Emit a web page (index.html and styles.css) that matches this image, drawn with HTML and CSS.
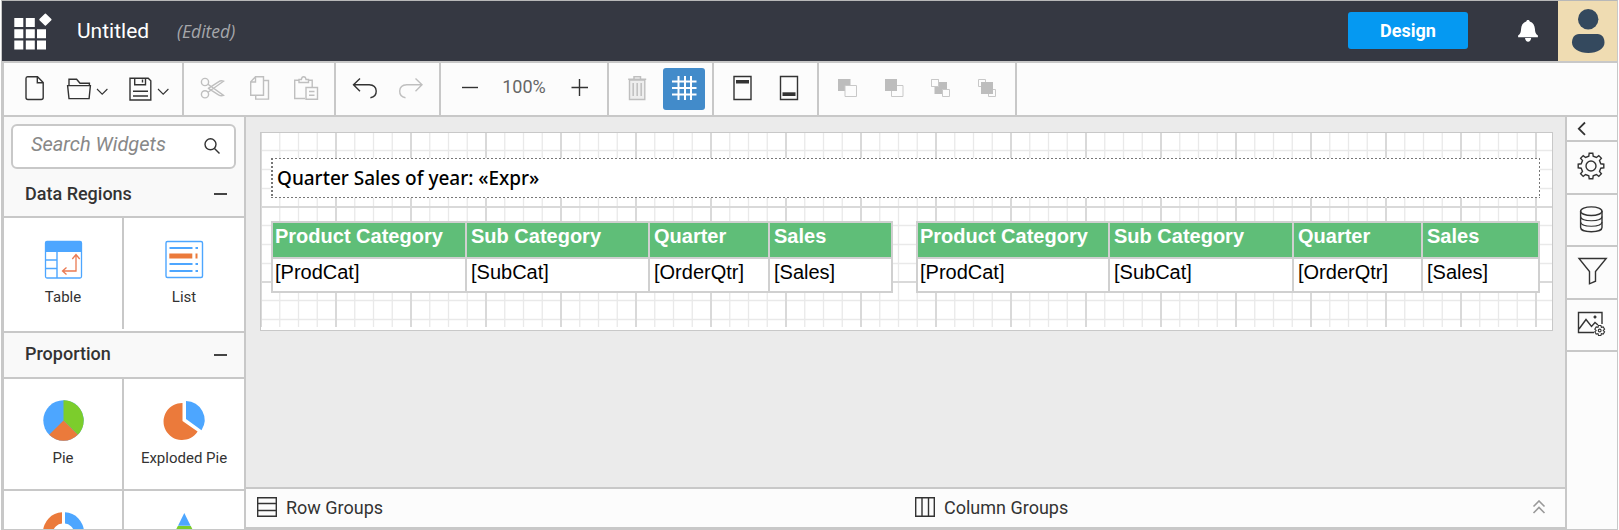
FILE: index.html
```html
<!DOCTYPE html>
<html lang="en">
<head>
<meta charset="utf-8">
<title>Report Designer</title>
<link rel="stylesheet" href="styles.css">
</head>
<body>
<div class="app">
  <header class="topbar">
    <svg class="logo" width="50" height="60" viewBox="2 1 50 60" fill="#fff"><path d="M14.3 18h9v9h-9zM25.8 18h9v9h-9zM14.3 29.2h9v9h-9zM25.8 29.2h9v9h-9zM37 29.2h9v9h-9zM14.3 40.6h9v9h-9zM25.8 40.6h9v9h-9zM37 40.6h9v9h-9z"/><path d="M45.4 14.2l5.4 5.4-5.4 5.4-5.4-5.4z" stroke="#fff" stroke-width="1.5" stroke-linejoin="round"/></svg>
    <h1 class="title">Untitled</h1>
    <span class="edited">(Edited)</span>
    <button class="design">Design</button>
    <svg class="bell" width="40" height="60" viewBox="1508 1 40 60" fill="#fff"><path d="M1528 20c1 0 1.6.6 1.7 1.4 3.4 1 5 4 5.2 7.4.2 3.400.6 5 3 6.700v1.700h-19.800v-1.700c2.400-1.700 2.800-3.300 3-6.700.2-3.400 1.800-6.400 5.200-7.400.1-.8.700-1.400 1.700-1.400zM1525 38h6.200c-.3 2.400-1.500 3.800-3.100 3.800s-2.800-1.400-3.100-3.800z"/></svg>
    <svg class="avatar" width="59" height="60" viewBox="1558 1 59 60" fill="#34495e"><circle cx="1588.200" cy="19.300" r="10.200"/><path d="M1579 34h18.500c4.500 0 7 4 7 8.500 0 6-7 10.500-16.200 10.500s-16.300-4.500-16.300-10.500c0-4.500 2.500-8.500 7-8.500z"/></svg>
  </header>

  <nav class="toolbar">
    <div class="group">
      <svg width="54" height="52" viewBox="4 63 54 52" class="ico"><path d="M27.500 76.700H37.500L43.200 82.500V97.500q0 2-2 2H28q-2 0-2-2V78.500q0-1.800 1.500-1.800zM37.300 77v5.700h5.700"/></svg>
      <svg width="60" height="52" viewBox="58 63 60 52" class="ico"><path d="M69 85v-5.800h7.600l3.400 4h9.400v2.300M67.600 85.600h22.800l-1.300 13H69z"/><path class="thin" d="M97 89l5.200 5.200 5.200-5.200"/></svg>
      <svg width="64" height="52" viewBox="118 63 64 52" class="ico"><path d="M130 78.200h18.200l2.600 2.600v19.200H130zM134.700 78.500v6.200h10.800v-6.200M142.500 79.500v3M133 91.200h15M133 96h15"/><path class="thin" d="M158 89l5.200 5.200 5.200-5.200"/></svg>
    </div>
    <div class="group">
      <svg width="52" height="52" viewBox="184 63 52 52" class="ico off"><circle cx="205" cy="82" r="3.600"/><circle cx="205" cy="94.300" r="3.600"/><path d="M208 84.200l15.500 11.200c-2 .8-3.500.4-5-.6l-10.500-6.600M208 92.200l15.500-11c-2-.8-3.500-.4-5 .6l-10.500 6.800"/></svg>
      <svg width="46" height="52" viewBox="236 63 46 52" class="ico off"><path d="M255.500 76.700h8v18.500h-12.800V81.700zM255.500 77v5h-4.800M264 80.500h4.500v18.600h-12.800v-3.500"/></svg>
      <svg width="52" height="52" viewBox="282 63 52 52" class="ico off"><path d="M305 98.500h-10.300V80.300h4.300M308 80.300h4.200V87M299 82.500h9.500v-3h-2.500q-.3-2.800-2.300-2.800t-2.300 2.800h-2.400zM306 87.500h11.500v11.700H306zM309 91.500h5.500M309 95.300h5.500"/></svg>
    </div>
    <div class="group">
      <svg width="52" height="52" viewBox="336 63 52 52" class="ico"><path d="M360 78.500l-6.500 6.300 6.500 6.400M353.800 84.800h15.400q6.800.4 7 6.200t-5.800 6.700"/></svg>
      <svg width="51" height="52" viewBox="388 63 51 52" class="ico off"><path d="M415.500 78.500l6.500 6.300-6.500 6.400M421.700 84.800h-15q-6.800.4-7 6.200t5.800 6.700"/></svg>
    </div>
    <div class="group zoom">
      <svg width="52" height="52" viewBox="441 63 52 52" class="ico"><path d="M462 87.500h16"/></svg>
      <span class="percent">100%</span>
      <svg width="52" height="52" viewBox="555 63 52 52" class="ico"><path d="M571.500 87.500H588M579.500 79v17"/></svg>
    </div>
    <div class="group">
      <svg width="54" height="52" viewBox="609 63 54 52" class="ico off"><path d="M629.500 80v19.500h15.300V80z" fill="#eee"/><path d="M628.200 79.200h18M634 78.500v-1.800h6.500v1.800M633.200 83v13M637.200 83v13M641.200 83v13" stroke-width="1.500"/></svg>
      <button class="gridbtn"><svg width="42" height="42" viewBox="663 68 42 42" fill="none" stroke="#fff" stroke-width="2"><path d="M678.500 76v24M685 76v24M691 76v24M672 81.500h24.500M672 88h24.500M672 94.500h24.500"/></svg></button>
    </div>
    <div class="group">
      <svg width="52" height="52" viewBox="714 63 52 52" class="ico"><path d="M734 76.500h17v23h-17z"/><path d="M736 80h13v3.500h-13z" fill="#333" stroke="none"/></svg>
      <svg width="51" height="52" viewBox="766 63 51 52" class="ico"><path d="M780.500 76.500h17v23h-17z"/><path d="M782.500 92.300h13v3.700h-13z" fill="#333" stroke="none"/></svg>
    </div>
    <div class="group">
      <svg width="52" height="52" viewBox="819 63 52 52" class="arr"><path class="solid" d="M838 79h12.500v12H838z"/><path d="M845 85.500h11.500v11H845z"/></svg>
      <svg width="46" height="52" viewBox="871 63 46 52" class="arr"><path d="M891.500 85.500H903v11h-11.500z"/><path class="solid" d="M885 79h12v12h-12z"/></svg>
      <svg width="46" height="52" viewBox="917 63 46 52" class="arr"><path d="M931.500 79.500h7v7h-7z"/><path class="solid" d="M934.500 82H947v12h-12.500z"/><path d="M942.500 89.500h7v7h-7z"/><path d="M931.500 79.500h7v7h-7z"/></svg>
      <svg width="52" height="52" viewBox="963 63 52 52" class="arr"><path d="M978.500 79.500h7v7h-7zM988.500 89.500h7v7h-7z"/><path class="solid" d="M981 82h12v12h-12z"/></svg>
    </div>
  </nav>

  <div class="main">
    <aside class="widgets">
      <div class="searchwrap"><div class="search"><span>Search Widgets</span>
        <svg width="30" height="40" viewBox="198 127 30 40" class="ico"><circle cx="210.500" cy="145.300" r="5.500"/><path d="M214.500 149.500l5 5"/></svg></div></div>
      <div class="sect"><span>Data Regions</span><i></i></div>
      <div class="cells regions">
        <div class="cell"><svg width="50" height="50" viewBox="38 234 50 50" fill="none"><rect x="45.500" y="241.500" width="36" height="36.500" rx="1.500" fill="#fff" stroke="#4da6ff" stroke-width="1.300"/><path d="M45.500 242h36v10h-36z" fill="#4da6ff"/><path d="M57 252v26M46 260h11M46 268.500h11" stroke="#4da6ff" stroke-width="1.400"/><path d="M76 255v16H63M72.300 259l3.700-4.500 3.700 4.500M66.500 267.500l-4 3.500 4 3.500" stroke="#ea7a52" stroke-width="1.300"/></svg><span>Table</span></div>
        <div class="cell"><svg width="50" height="50" viewBox="159 234 50 50" fill="none"><rect x="166" y="241.500" width="36.500" height="36" rx="1.500" stroke="#4da6ff" stroke-width="1.400"/><path d="M169.500 248h23M169.500 264h23M169.500 271h23M195.500 248h2.500M195.500 264h2.500M195.500 271h2.500" stroke="#4da6ff" stroke-width="1.800"/><path d="M169.300 253.500h23v5h-23zM195.500 253.500h2v5h-2z" fill="#eb7a3b"/></svg><span>List</span></div>
      </div>
      <div class="sect second"><span>Proportion</span><i></i></div>
      <div class="cells pies">
        <div class="cell"><svg width="50" height="50" viewBox="38 395 50 50"><circle cx="63.500" cy="420.500" r="20.200" fill="#4da6ff"/><path d="M63.500 420.500V400.300A20.200 20.200 0 0 1 77.800 434.800z" fill="#7ccd2c"/><path d="M63.500 420.500L77.800 434.800A20.200 20.200 0 0 1 49.200 434.800z" fill="#eb7a3b"/></svg><span>Pie</span></div>
        <div class="cell"><svg width="50" height="50" viewBox="159 395 50 50"><path d="M182.500 421V403A18.500 18.500 0 1 0 197.600 431.500z" fill="#eb7a3b"/><path d="M186 419V401A19 19 0 0 1 201.500 430.300z" fill="#4da6ff"/></svg><span>Exploded Pie</span></div>
      </div>
      <div class="cells last">
        <div class="cell"><svg width="50" height="22" viewBox="38 507 50 22"><path d="M62 512.300A20 20 0 0 0 43 532h10a10 10 0 0 1 9-8.500z" fill="#eb7a3b"/><path d="M65 512.300A20 20 0 0 1 84 532H74a10 10 0 0 0-9-8.500z" fill="#4da6ff"/></svg></div>
        <div class="cell"><svg width="50" height="22" viewBox="159 507 50 22"><path d="M184.300 513l6.300 12.700h-12.600z" fill="#4da6ff"/><path d="M177.800 526h13l2 4h-17z" fill="#7ccd2c"/></svg></div>
      </div>
    </aside>

    <section class="center">
      <div class="canvas">
        <div class="page">
          <svg class="grid" width="1291" height="194">
            <defs><pattern id="grid" width="75" height="75" patternUnits="userSpaceOnUse" fill="none">
              <path d="M18.750 0v75M37.500 0v75M56.250 0v75M0 17.500h75M0 36.500h75M0 55.500h75" stroke="#e9e9e9" stroke-width="1.300"/>
              <path d="M75 0v75M0 0v75M0 74h75" stroke="#d9d9d9" stroke-width="2"/></pattern></defs>
            <rect width="1291" height="194" fill="url(#grid)"/>
          </svg>
          <div class="textbox">Quarter Sales of year: «Expr»</div>
          <div class="tables">
            <div class="table t1">
              <b>Product Category</b><b>Sub Category</b><b>Quarter</b><b>Sales</b>
              <span>[ProdCat]</span><span>[SubCat]</span><span>[OrderQtr]</span><span>[Sales]</span>
            </div>
            <div class="table t2">
              <b>Product Category</b><b>Sub Category</b><b>Quarter</b><b>Sales</b>
              <span>[ProdCat]</span><span>[SubCat]</span><span>[OrderQtr]</span><span>[Sales]</span>
            </div>
          </div>
        </div>
      </div>
      <div class="groups">
        <div class="rowgroups"><svg width="20" height="20" viewBox="0 0 20 20" class="ico"><path d="M.7.700h18.600v18.600H.7zM.7 6.500h18.600M.7 13.500h18.600"/></svg><span>Row Groups</span></div>
        <div class="colgroups"><svg width="20" height="20" viewBox="0 0 20 20" class="ico"><path d="M.7.700h18.600v18.600H.7zM7 .7v18.600M13.500.7v18.600"/></svg><span>Column Groups</span></div>
        <svg class="up" width="14" height="14" viewBox="0 0 14 14" fill="none" stroke="#999" stroke-width="1.600"><path d="M1.500 6.500L7 1l5.500 5.500M1.500 13L7 7.500l5.500 5.500"/></svg>
      </div>
    </section>

    <aside class="side">
      <div class="tab collapse"><svg width="50" height="23" viewBox="1567 117 50 23" class="ico"><path d="M1585 122.500l-6.200 6.200 6.200 6.200" stroke-width="1.800"/></svg></div>
      <div class="tab"><svg width="50" height="50" viewBox="-24 -24 50 50" class="ico"><path d="M-2.200 -9.800L-1.800 -12.800H1.800L2.200 -9.800L5.400 -8.500L7.800 -10.400L10.400 -7.800L8.500 -5.400L9.800 -2.200L12.800 -1.800V1.800L9.800 2.200L8.500 5.400L10.400 7.800L7.800 10.400L5.400 8.500L2.200 9.800L1.800 12.800H-1.800L-2.200 9.800L-5.400 8.500L-7.800 10.400L-10.400 7.800L-8.500 5.400L-9.800 2.200L-12.800 1.800V-1.800L-9.800 -2.200L-8.500 -5.400L-10.400 -7.800L-7.800 -10.400L-5.400 -8.500Z"/><circle r="5"/></svg></div>
      <div class="tab short"><svg width="50" height="50" viewBox="1567 195 50 50" class="ico"><ellipse cx="1591.300" cy="211.200" rx="10.700" ry="4.300"/><path d="M1580.600 211v16.500c0 5.600 21.400 5.600 21.400 0V211"/><path class="thin" d="M1580.600 216.500c0 5.600 21.400 5.600 21.400 0M1580.600 222c0 5.600 21.400 5.600 21.400 0"/></svg></div>
      <div class="tab"><svg width="50" height="51" viewBox="1567 247 50 51" class="ico"><path d="M1579 258.500h27.200l-10.700 13v9.700l-6 2.600v-12.300z"/></svg></div>
      <div class="tab short"><svg width="50" height="50" viewBox="1567 300 50 50" class="ico"><path d="M1594 332.500h-15.500v-20h23.500v11.500M1579 329l7-9.500 5.500 7 3.500-4 3 2.500"/><circle cx="1595" cy="317" r="1.200" fill="#333" stroke-width=".7"/><g transform="translate(1599.700 330.500)"><path class="thin" d="M-1.200 -5H1.200L1.700 -3.200L3.500 -3.600L4.900 -1.400L3.600 0L4.900 1.400L3.500 3.600L1.700 3.200L1.200 5H-1.200L-1.700 3.200L-3.500 3.600L-4.900 1.400L-3.600 0L-4.900 -1.400L-3.500 -3.600L-1.700 -3.200Z"/><circle class="thin" r="1.400"/></g></svg></div>
    </aside>
  </div>
</div>
</body>
</html>
```
FILE: styles.css
```css
* { box-sizing: border-box; }
html { height: 530px; overflow: hidden; }
body { margin: 0; height: 530px; background: #fff; font-family: Roboto, "Liberation Sans", sans-serif; color: #333; overflow: hidden; }
svg { display: block; flex: none; }
button { border: 0; padding: 0; font: inherit; }

.app {
  width: 1617px; height: 530px; margin-left: 1px;
  display: flex; flex-direction: column; overflow: hidden;
  border: 1px solid #c8c8c8; border-top-color: #b8b8b8;
}
.topbar { height: 60px; flex: none; background: #353842; display: flex; align-items: center; }
.title { margin: 0 0 0 25px; width: 100px; font-size: 21px; font-weight: 400; color: #fff; line-height: 60px; }
.edited { font: italic 17.5px/60px "Open Sans", "Noto Sans", sans-serif; color: #a6a7ab; }
.design { margin-left: auto; width: 120px; height: 37px; margin-bottom: 1px; border-radius: 3px; background: #0599f2; color: #fff; font-size: 18px; font-weight: 700; }
.bell { margin-left: 40px; margin-right: 10px; }
.avatar { background: #efdcb2; }

.toolbar { height: 56px; flex: none; display: flex; background: #fcfcfc; border: solid #c8c8c8; border-width: 2px 0 2px 2px; }
.group { display: flex; align-items: center; border-right: 2px solid #c8c8c8; }
.ico { fill: none; stroke: #333; stroke-width: 1.4; }
.ico.off { stroke: #bfbfbf; }
.ico .thin { stroke-width: 1.1; }
.arr { fill: #fcfcfc; stroke: #c8c8c8; stroke-width: 1; }
.arr .solid { fill: #bdbdbd; stroke: none; }
.percent { width: 62px; text-align: center; font-size: 18px; line-height: 48px; color: #666; padding-bottom: 4px; }
.gridbtn { width: 42px; height: 42px; margin-right: 7px; border-radius: 3px; background: #428bca; }

.main { flex: 1; min-height: 0; display: flex; border-left: 2px solid #c8c8c8; }
.widgets { width: 242px; flex: none; border-right: 2px solid #c8c8c8; background: #fcfcfc; overflow: hidden; }
.searchwrap { padding: 7px 8px 0 7px; background: #f9f9f9; height: 55px; }
.search { height: 45px; border: 2px solid #c8c8c8; border-radius: 6px; background: #fff; display: flex; justify-content: space-between; padding: 0 6px 0 18px; font-size: 20px; font-style: italic; color: #888; line-height: 37px; }
.sect { height: 46px; background: #f9f9f9; border-bottom: 2px solid #c8c8c8; display: flex; align-items: center; justify-content: space-between; padding: 0 17px 0 21px; font-size: 18px; font-weight: 500; }
.sect span { padding-bottom: 2px; }
.sect.second span { padding-bottom: 4px; }
.sect i { width: 13px; height: 2px; background: #444; }
.cells { display: grid; grid-template-columns: 120px 120px; background: #fff; border-bottom: 2px solid #c8c8c8; }
.cell { display: flex; flex-direction: column; align-items: center; padding-top: 16px; font-size: 15px; line-height: 26px; overflow: hidden; }
.cell:first-child { border-right: 2px solid #c8c8c8; }
.regions { height: 115px; }
.regions .cell { height: 111px; }
.pies { height: 112px; }
.last { height: 38px; border-bottom: 0; }

.center { flex: 1; display: flex; flex-direction: column; }
.canvas { flex: 1; background: #ebebeb; padding: 15px 12px 0 14px; }
.page { position: relative; height: 199px; background: #fff; border: 1px solid #c8c8c8; padding: 25px 12px 0 10px; }
.grid { position: absolute; left: 0; top: 0; }
.textbox {
  position: relative; height: 40px; padding-left: 6px;
  font: 500 19px/40px "Noto Sans", "Open Sans", sans-serif; letter-spacing: -.02px; color: #000;
  background:
    repeating-linear-gradient(90deg, #777 0 2px, #fff 2px 4px) 0 0 / 100% 1px no-repeat,
    repeating-linear-gradient(90deg, #777 0 2px, #fff 2px 4px) 0 100% / 100% 1px no-repeat,
    repeating-linear-gradient(#777 0 2px, #fff 2px 4px) 0 0 / 2px 100% no-repeat,
    repeating-linear-gradient(#777 0 2px, #fff 2px 4px) 100% 0 / 1px 100% no-repeat,
    #fff;
}
.tables { position: relative; display: flex; justify-content: space-between; margin-top: 23px; }
.table { display: grid; grid-template-rows: 34px 32px; gap: 2px; padding: 2px; background: #d0d0d0; font: 20px "Liberation Sans", sans-serif; color: #000; }
.t1 { grid-template-columns: 192px 181px 118px 121px; }
.t2 { grid-template-columns: 190px 182px 127px 115px; }
.table b, .table span { background: #fff; padding-left: 2px; line-height: 27px; }
.table b { background: #5fbe78; color: #fff; }
.table b:nth-child(4n+2), .table b:nth-child(4n+3), .table b:nth-child(4n+4),
.table span:nth-child(4n+2), .table span:nth-child(4n+3), .table span:nth-child(4n+4) { padding-left: 4px; }

.groups { height: 42px; flex: none; background: #fcfcfc; border: solid #c8c8c8; border-width: 2px 0; display: flex; align-items: center; font-size: 18px; padding: 0 19px 2px 11px; }
.rowgroups, .colgroups { display: flex; align-items: center; gap: 9px; }
.rowgroups { width: 658px; }
.up { margin-left: auto; }

.side { width: 52px; flex: none; background: #fcfcfc; border-left: 2px solid #c8c8c8; }
.tab { height: 53px; border-bottom: 2px solid #c8c8c8; }
.tab.short { height: 52px; }
.tab.collapse { height: 25px; }
```
